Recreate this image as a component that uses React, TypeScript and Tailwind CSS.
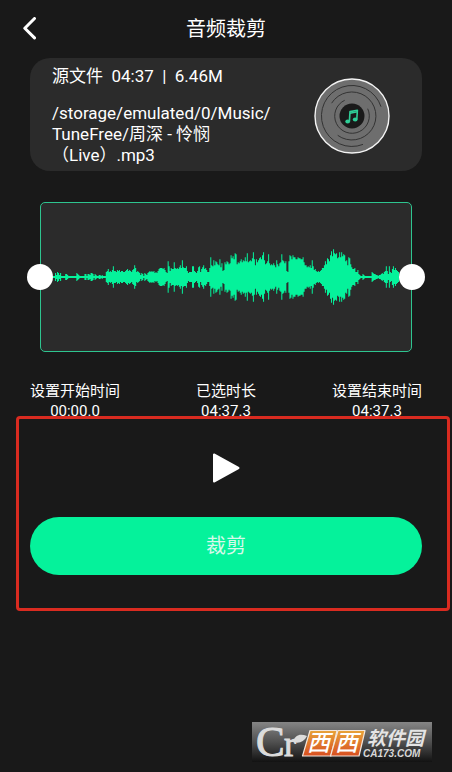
import { useState } from 'react';

// Half heights of the wave, one per column
const LEVELS = [
  1, 1, 4, 2, 5, 4, 2, 4, 1, 1, 1, 1, 3, 3, 2, 1, 1, 1, 1, 1,
  1, 1, 1, 4, 3, 2, 1, 1, 1, 1, 1, 3, 3, 1, 3, 3, 2, 4, 4, 3,
  1, 3, 2, 1, 1, 2, 2, 1, 2, 1, 1, 1, 5, 6, 8, 5, 6, 5, 7, 11,
  6, 6, 5, 7, 6, 7, 5, 6, 6, 5, 5, 6, 7, 8, 6, 7, 6, 5, 7, 8,
  12, 9, 5, 6, 5, 4, 2, 4, 3, 1, 4, 3, 2, 4, 5, 6, 5,
  6, 5, 6, 4, 5, 4, 6, 8, 9, 9, 9, 8, 9, 7, 5, 4, 16, 11,
  6, 9, 8, 8, 15, 9, 8, 9, 8, 10, 12, 9, 17, 10, 9, 9, 11, 6, 4,
  5, 5, 5, 11, 11, 6, 5, 4, 6, 10, 11, 5, 8, 10, 12, 8, 9, 7, 5, 5,
  9, 20, 12, 11, 17, 12, 16, 15, 13, 12, 18, 10, 14, 6, 7, 15, 13, 16, 15, 13,
  14, 22, 19, 21, 18, 24, 23, 13, 15, 14, 16, 18, 15, 17, 16, 20, 16, 24,
  15, 16, 17, 16, 19, 25, 18, 12, 18, 15, 17, 19, 20, 18, 22, 25, 17, 13, 14,
  16, 23, 14, 12, 13, 12, 14, 12, 10, 17, 13, 11, 14, 15, 23, 17, 16, 14, 16, 6,
  5, 16, 22, 21, 18, 22, 20, 20, 18, 18, 20, 19, 19, 18, 18, 20, 15, 12, 12, 10,
  11, 10, 12, 9, 17, 11, 7, 8, 6, 5, 6, 5, 6, 7, 9, 9, 12, 16, 13, 19, 18,
  16, 22, 26, 21, 28, 24, 23, 24, 19, 20, 25, 20, 25, 21, 23, 22, 16, 17, 12,
  20, 19, 13, 10, 8, 8, 9, 5, 5, 7, 3, 2, 1, 1, 3, 2, 1, 1, 1,
  1, 1, 1, 1, 5, 4, 3, 3, 2, 2, 1, 2, 2, 3, 4, 3, 5, 6, 11,
  6, 3, 11, 5, 4, 8, 11, 7, 9, 7, 6, 5,
];

const wavePath = LEVELS.map((level, i) => `M${i} ${75 - level}h1v${level * 2}h-1z`).join('');

const THUMB =
  'absolute inset-0 h-full w-full cursor-pointer appearance-none bg-transparent pointer-events-none [&::-webkit-slider-thumb]:pointer-events-auto [&::-webkit-slider-thumb]:size-[26px] [&::-webkit-slider-thumb]:appearance-none [&::-webkit-slider-thumb]:rounded-full [&::-webkit-slider-thumb]:bg-white';

const DURATION = 2773;

const formatTime = (tenths: number) => {
  const minutes = Math.floor(tenths / 600);
  const seconds = Math.floor((tenths % 600) / 10);
  return `${String(minutes).padStart(2, '0')}:${String(seconds).padStart(2, '0')}.${tenths % 10}`;
};

function Disc() {
  return (
    <svg viewBox="0 0 76 76" className="size-[76px] shrink-0" fill="none" aria-hidden="true">
      <circle cx="38" cy="38" r="37" fill="#6e6e6e" stroke="#f4f4f4" strokeWidth="1.4" />
      <g stroke="#333333" strokeWidth="1">
        <path d="M67 28.7A30.5 30.5 0 1 0 49 66.4" />
        <path d="M17.6 25.2A24 24 0 1 1 23.7 57.3" />
        <path d="M30.7 22.3A17.3 17.3 0 1 0 53.7 30.7" />
      </g>
      <circle cx="38" cy="38" r="12.5" fill="#1a1a1a" />
      <g stroke="#2fce97" strokeWidth="1.6" strokeLinejoin="round">
        <path d="M35.4 43.2 36 33.6 43.4 32.2 42.8 41.2" />
        <path d="M36 35.2 43.4 33.8" />
      </g>
      <ellipse cx="33.7" cy="43.4" rx="2.4" ry="2" fill="#2fce97" />
      <ellipse cx="41.2" cy="41.4" rx="2.4" ry="2" fill="#2fce97" />
    </svg>
  );
}

function SiteBadge() {
  return (
    <svg viewBox="0 0 180 40" className="h-10 w-[180px] overflow-visible" role="img" aria-label="西西软件园">
      <defs>
        <linearGradient id="badge" x1="0" y1="0" x2="0" y2="1">
          <stop offset="0" stopColor="#858585" />
          <stop offset="0.5" stopColor="#505050" />
          <stop offset="1" stopColor="#121212" />
        </linearGradient>
        <linearGradient id="tile" x1="0" y1="0" x2="0" y2="1">
          <stop offset="0" stopColor="#e8a33a" />
          <stop offset="1" stopColor="#d84f20" />
        </linearGradient>
      </defs>
      <rect width="180" height="40" fill="url(#badge)" />
      <g fill="#dcdcdc" stroke="#dcdcdc" strokeWidth="1" fontFamily="'Liberation Serif', serif">
        <text x="4" y="34" fontSize="43">C</text>
        <text x="32" y="34" fontSize="36">r</text>
      </g>
      <path d="M41 20C43 13 48 11 55 14C52 20 47 22 41 20Z" fill="#dcdcdc" />
      <g fill="url(#tile)" stroke="#f3e6dc" strokeWidth="1.2" strokeLinejoin="round">
        <path d="M58 8.5H85L79 34H50.5Z" />
        <path d="M86 8.5H113L107 34H78.5Z" />
      </g>
      <g fill="#fff" fontStyle="italic" fontFamily="'Noto Sans CJK SC', sans-serif">
        <text x="55" y="29" fontSize="23" fontWeight="500">西</text>
        <text x="83" y="29" fontSize="23" fontWeight="500">西</text>
        <text x="115" y="23" fontSize="19" fontWeight="700" fill="#e4e4e4">软件园</text>
      </g>
      <text
        x="111"
        y="35"
        fontSize="10"
        fontStyle="italic"
        fontWeight="700"
        fill="#d8d8d8"
        fontFamily="'Liberation Sans', sans-serif"
      >
        CA173.COM
      </text>
    </svg>
  );
}

export default function App() {
  const [start, setStart] = useState(0);
  const [end, setEnd] = useState(DURATION);

  const times = [
    { label: '设置开始时间', value: formatTime(start) },
    { label: '已选时长', value: formatTime(Math.max(end - start, 0)) },
    { label: '设置结束时间', value: formatTime(end) },
  ];

  return (
    <main className="flex min-h-screen flex-col bg-[#191919] font-[Roboto,'Noto_Sans_CJK_SC',sans-serif] text-white">
      <header className="grid h-[58px] grid-cols-[1fr_auto_1fr] items-center px-5">
        <button type="button" aria-label="返回" className="size-6">
          <svg viewBox="0 0 24 24" className="size-6" fill="none" stroke="currentColor" strokeWidth="3" strokeLinecap="round" strokeLinejoin="round">
            <path d="M14.5 1.5 4.8 11.2l9.7 9.7" />
          </svg>
        </button>
        <h1 className="text-[20px] leading-6">音频裁剪</h1>
      </header>

      <section className="mx-[30px] flex items-center justify-between rounded-[20px] bg-[#2b2b2b] pt-2 pr-8 pb-[5px] pl-[22px]">
        <div className="text-[17px] leading-[21px]">
          <p className="mb-4 whitespace-pre">源文件  04:37  |  6.46M</p>
          <p>
            /storage/emulated/0/Music/
            <br />
            TuneFree/周深 - 怜悯
            <br />
            （Live）.mp3
          </p>
        </div>
        <Disc />
      </section>

      <section className="relative mx-10 mt-[31px]">
        <div className="h-[150px] rounded-[5px] border border-[#2ec48f] bg-[#2b2b2b] px-3">
          <svg viewBox={`0 0 ${LEVELS.length} 150`} preserveAspectRatio="none" className="h-full w-full" aria-hidden="true">
            <path d={wavePath} fill="#05f29b" />
          </svg>
        </div>
        <div className="absolute inset-y-0 -right-[13px] -left-[13px]">
          <input
            type="range"
            aria-label="开始"
            min={0}
            max={DURATION}
            value={start}
            onChange={(e) => setStart(Math.min(Number(e.target.value), end))}
            className={THUMB}
          />
          <input
            type="range"
            aria-label="结束"
            min={0}
            max={DURATION}
            value={end}
            onChange={(e) => setEnd(Math.max(Number(e.target.value), start))}
            className={THUMB}
          />
        </div>
      </section>

      <dl className="mx-[30px] mt-[29px] flex justify-between text-center text-[15px] leading-5">
        {times.map((time) => (
          <div key={time.label}>
            <dt>{time.label}</dt>
            <dd>{time.value}</dd>
          </div>
        ))}
      </dl>

      <section className="-mt-[5px] mr-[2px] ml-4 flex flex-col rounded-[4px] border-[3px] border-[#d92b20] pt-[33px] pr-[25px] pb-[33px] pl-[11px]">
        <button type="button" aria-label="播放" className="size-8 self-center">
          <svg viewBox="0 0 32 32" className="size-8" fill="currentColor" stroke="currentColor" strokeWidth="2" strokeLinejoin="round">
            <path d="M4 2.5V29.5L28.5 16Z" />
          </svg>
        </button>
        <button type="button" className="mt-[33px] h-[58px] w-full rounded-full bg-[#05f29b] text-[20px] text-[#d6f9ea]">
          裁剪
        </button>
      </section>

      <footer className="mt-auto flex justify-end pr-5 pb-[10px]">
        <SiteBadge />
      </footer>
    </main>
  );
}
